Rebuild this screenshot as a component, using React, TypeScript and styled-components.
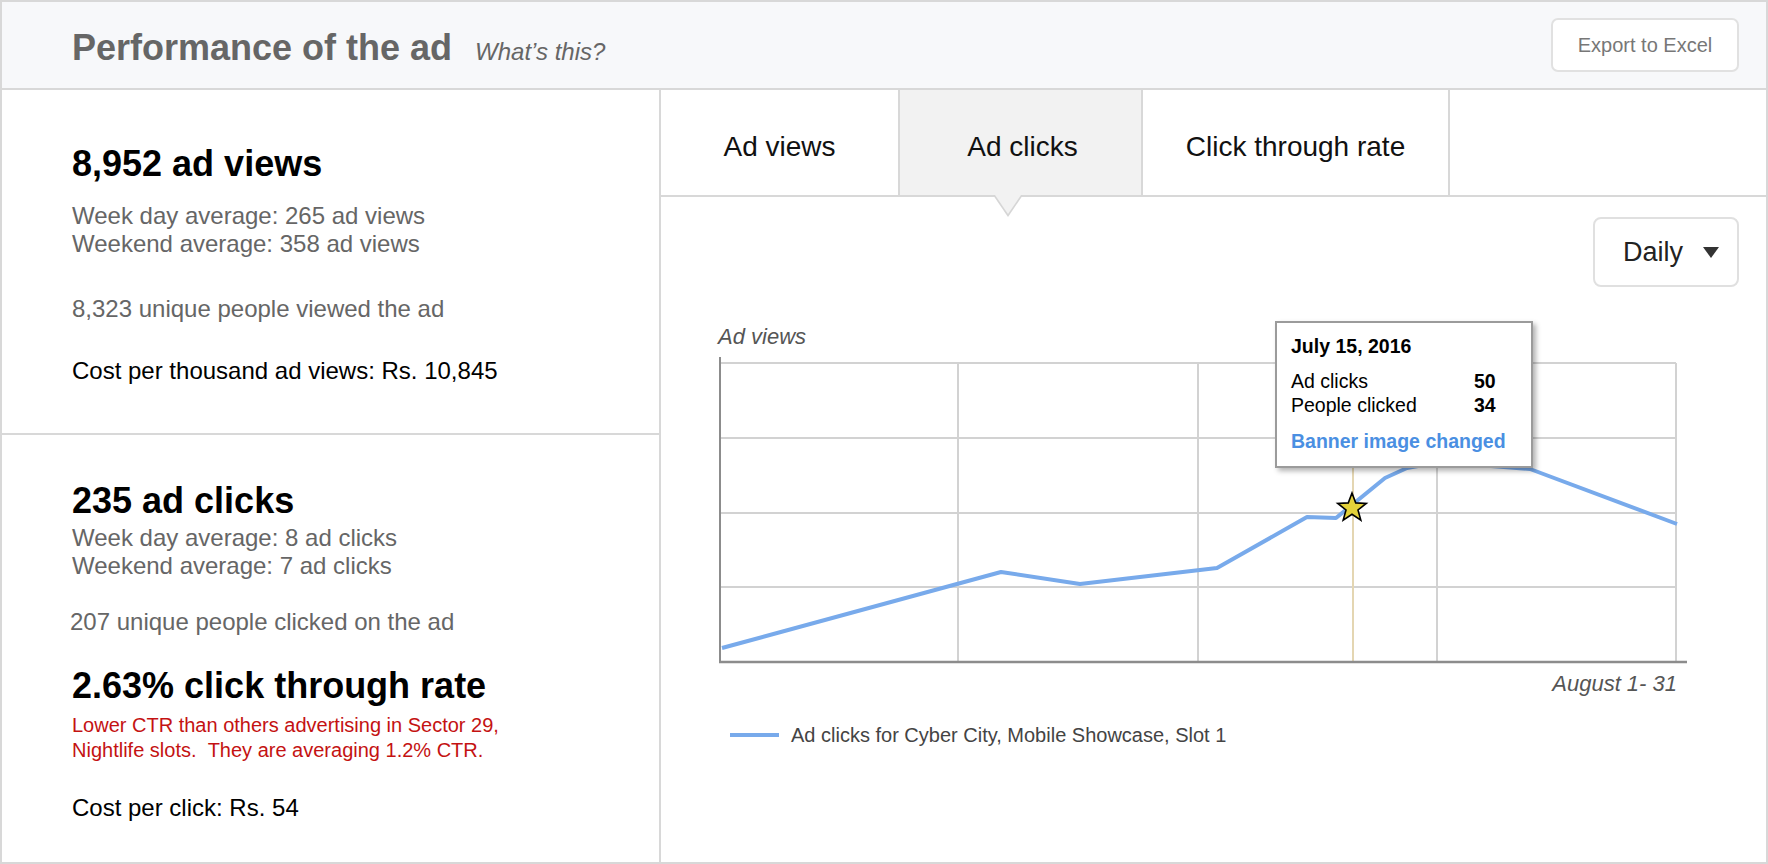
import React from "react";
import styled, { createGlobalStyle } from "styled-components";

const GlobalStyle = createGlobalStyle`
  html, body { margin: 0; padding: 0; background: #fff; }
  body { font-family: "Liberation Sans", Arial, Helvetica, sans-serif; color: #000; }
  * { box-sizing: border-box; }
`;

const Frame = styled.div`
  width: 1768px;
  height: 864px;
  border: 2px solid #d8d8d8;
  display: flex;
  flex-direction: column;
  overflow: hidden;
  background: #fff;
`;

const Header = styled.header`
  flex: none;
  height: 88px;
  background: #f7f8fa;
  border-bottom: 2px solid #d8d8d8;
  display: flex;
  align-items: center;
  justify-content: space-between;
  padding: 0 27px 0 70px;
`;

const TitleGroup = styled.div`
  display: flex;
  align-items: baseline;
  gap: 23px;
  padding-top: 5px;
`;

const Title = styled.h1`
  margin: 0;
  font-size: 36px;
  line-height: 40px;
  font-weight: 700;
  color: #666;
`;

const HelpLink = styled.span`
  font-size: 24px;
  font-style: italic;
  color: #666;
`;

const ExportButton = styled.button`
  width: 188px;
  height: 54px;
  background: #fff;
  border: 2px solid #e1e1e1;
  border-radius: 7px;
  font-family: inherit;
  font-size: 20px;
  color: #777;
  cursor: pointer;
`;

const Body = styled.div`
  flex: 1;
  display: flex;
  min-height: 0;
`;

const LeftPanel = styled.aside`
  flex: none;
  width: 659px;
  border-right: 2px solid #d8d8d8;
  display: flex;
  flex-direction: column;
`;

const Section = styled.section<{ $top: number; $height?: number }>`
  padding: ${(p) => p.$top}px 0 0 70px;
  ${(p) => (p.$height ? `height: ${p.$height}px; flex: none; border-bottom: 2px solid #d8d8d8;` : "flex: 1;")}
`;

const StatHeading = styled.h2<{ $gap?: number }>`
  margin: ${(p) => p.$gap ?? 0}px 0 0 0;
  font-size: 36px;
  line-height: 40px;
  font-weight: 700;
  color: #000;
`;

const StatLine = styled.p<{ $gap?: number; $tone?: "muted" | "strong"; $shift?: number }>`
  margin: ${(p) => p.$gap ?? 0}px 0 0 ${(p) => p.$shift ?? 0}px;
  font-size: 24px;
  line-height: 28px;
  color: ${(p) => (p.$tone === "strong" ? "#000" : "#666")};
`;

const Warning = styled.p<{ $gap?: number }>`
  margin: ${(p) => p.$gap ?? 0}px 0 0 0;
  font-size: 20px;
  line-height: 25px;
  color: #c41212;
`;

const RightPanel = styled.main`
  flex: 1;
  position: relative;
  display: flex;
  flex-direction: column;
`;

const Tabs = styled.nav`
  flex: none;
  height: 107px;
  border-bottom: 2px solid #d8d8d8;
  display: flex;
`;

const Tab = styled.div<{ $width: number; $active?: boolean }>`
  position: relative;
  width: ${(p) => p.$width}px;
  height: 100%;
  border-right: 2px solid #d8d8d8;
  display: flex;
  align-items: center;
  justify-content: center;
  padding-top: 8px;
  font-size: 28px;
  color: #111;
  background: ${(p) => (p.$active ? "#f2f2f2" : "#fff")};
  ${(p) =>
    p.$active
      ? `
    padding-left: 4px;
    &::before {
      content: "";
      position: absolute;
      top: 100%;
      left: 93px;
      border-left: 15px solid transparent;
      border-right: 15px solid transparent;
      border-top: 22px solid #d6d6d6;
      z-index: 2;
    }
    &::after {
      content: "";
      position: absolute;
      top: 100%;
      left: 95px;
      border-left: 13px solid transparent;
      border-right: 13px solid transparent;
      border-top: 19px solid #f2f2f2;
      z-index: 3;
    }
  `
      : ""}
`;

const Toolbar = styled.div`
  display: flex;
  justify-content: flex-end;
  padding: 20px 27px 0 0;
`;

const Select = styled.button`
  width: 146px;
  height: 70px;
  background: #fff;
  border: 2px solid #e0e0e0;
  border-radius: 8px;
  display: flex;
  align-items: center;
  gap: 20px;
  padding: 0 0 0 28px;
  font-family: inherit;
  font-size: 27px;
  color: #222;
  cursor: pointer;
`;

const ChartBlock = styled.div`
  margin-top: 37px;
  padding-left: 55px;
`;

const AxisTitle = styled.div`
  margin-left: 2px;
  font-size: 22px;
  line-height: 26px;
  font-style: italic;
  color: #555;
`;

const Plot = styled.svg`
  display: block;
  margin-top: 2px;
`;

const RangeLabel = styled.div`
  width: 976px;
  margin-top: 5px;
  padding-right: 15px;
  text-align: right;
  font-size: 22px;
  line-height: 26px;
  font-style: italic;
  color: #555;
`;

const Legend = styled.div`
  display: flex;
  align-items: center;
  gap: 12px;
  margin-top: 26px;
  padding-left: 69px;
`;

const LegendSwatch = styled.span`
  width: 49px;
  height: 4px;
  background: #78aaeb;
`;

const LegendText = styled.span`
  font-size: 20px;
  line-height: 24px;
  color: #444;
`;

const Tooltip = styled.div`
  position: absolute;
  left: 614px;
  top: 231px;
  width: 258px;
  height: 147px;
  background: #fff;
  border: 2px solid #9b9b9b;
  box-shadow: 3px 3px 5px rgba(0, 0, 0, 0.3);
  padding: 12px 14px 0 14px;
  z-index: 5;
`;

const TooltipDate = styled.div`
  font-size: 19.5px;
  line-height: 22px;
  font-weight: 700;
  color: #000;
`;

const TooltipGrid = styled.div`
  display: grid;
  grid-template-columns: 183px auto;
  margin-top: 12px;
  font-size: 19.5px;
  line-height: 24px;
  color: #000;
`;

const TooltipValue = styled.span`
  font-weight: 700;
`;

const TooltipLink = styled.div`
  margin-top: 12px;
  font-size: 19.5px;
  line-height: 24px;
  font-weight: 700;
  color: #4a8fe2;
`;

const hLines = [11, 86, 161, 235];
const vLines = [242, 482, 721, 960];
const series: [number, number][] = [
  [6, 296],
  [285, 220],
  [364, 232],
  [501, 216],
  [591, 165],
  [620, 166],
  [669, 126],
  [691, 116],
  [724, 110],
  [814, 117],
  [961, 172],
];

const starPoints = (cx: number, cy: number, R: number, r: number) =>
  Array.from({ length: 10 }, (_, i) => {
    const a = -Math.PI / 2 + (i * Math.PI) / 5;
    const rad = i % 2 === 0 ? R : r;
    return `${(cx + rad * Math.cos(a)).toFixed(2)},${(cy + rad * Math.sin(a)).toFixed(2)}`;
  }).join(" ");

const Chart: React.FC = () => (
  <Plot width={976} height={314} viewBox="0 0 976 314">
    {hLines.map((y) => (
      <line key={`h${y}`} x1={4} x2={960} y1={y} y2={y} stroke="#d2d2d2" strokeWidth={2} />
    ))}
    {vLines.map((x) => (
      <line key={`v${x}`} x1={x} x2={x} y1={11} y2={310} stroke="#d2d2d2" strokeWidth={2} />
    ))}
    <line x1={637} x2={637} y1={116} y2={310} stroke="#e4d6b2" strokeWidth={2} />
    <line x1={4} x2={4} y1={5} y2={311} stroke="#8c8c8c" strokeWidth={2} />
    <line x1={3} x2={971} y1={310} y2={310} stroke="#8c8c8c" strokeWidth={2.5} />
    <polyline
      points={series.map(([x, y]) => `${x},${y}`).join(" ")}
      fill="none"
      stroke="#78aaeb"
      strokeWidth={4}
      strokeLinejoin="round"
    />
    <polygon points={starPoints(636, 156, 15, 6.3)} fill="#e4d23a" stroke="#000" strokeWidth={1.6} strokeLinejoin="miter" />
  </Plot>
);

export default function App() {
  return (
    <>
      <GlobalStyle />
      <Frame>
        <Header>
          <TitleGroup>
            <Title>Performance of the ad</Title>
            <HelpLink>What’s this?</HelpLink>
          </TitleGroup>
          <ExportButton>Export to Excel</ExportButton>
        </Header>
        <Body>
          <LeftPanel>
            <Section $top={54} $height={345}>
              <StatHeading>8,952 ad views</StatHeading>
              <StatLine $gap={18}>Week day average: 265 ad views</StatLine>
              <StatLine>Weekend average: 358 ad views</StatLine>
              <StatLine $gap={37}>8,323 unique people viewed the ad</StatLine>
              <StatLine $gap={34} $tone="strong">
                Cost per thousand ad views: Rs. 10,845
              </StatLine>
            </Section>
            <Section $top={46}>
              <StatHeading>235 ad clicks</StatHeading>
              <StatLine $gap={3}>Week day average: 8 ad clicks</StatLine>
              <StatLine>Weekend average: 7 ad clicks</StatLine>
              <StatLine $gap={28} $shift={-2}>
                207 unique people clicked on the ad
              </StatLine>
              <StatHeading $gap={30}>2.63% click through rate</StatHeading>
              <Warning $gap={7}>
                Lower CTR than others advertising in Sector 29,
                <br />
                Nightlife slots.{"\u00a0\u00a0"}They are averaging 1.2% CTR.
              </Warning>
              <StatLine $gap={31} $tone="strong">
                Cost per click: Rs. 54
              </StatLine>
            </Section>
          </LeftPanel>
          <RightPanel>
            <Tabs>
              <Tab $width={239}>Ad views</Tab>
              <Tab $width={243} $active>
                Ad clicks
              </Tab>
              <Tab $width={307}>Click through rate</Tab>
            </Tabs>
            <Toolbar>
              <Select>
                <span>Daily</span>
                <svg width="16" height="11" viewBox="0 0 16 11">
                  <polygon points="0,0 16,0 8,11" fill="#333" />
                </svg>
              </Select>
            </Toolbar>
            <ChartBlock>
              <AxisTitle>Ad views</AxisTitle>
              <Chart />
              <RangeLabel>August 1- 31</RangeLabel>
            </ChartBlock>
            <Legend>
              <LegendSwatch />
              <LegendText>Ad clicks for Cyber City, Mobile Showcase, Slot 1</LegendText>
            </Legend>
            <Tooltip>
              <TooltipDate>July 15, 2016</TooltipDate>
              <TooltipGrid>
                <span>Ad clicks</span>
                <TooltipValue>50</TooltipValue>
                <span>People clicked</span>
                <TooltipValue>34</TooltipValue>
              </TooltipGrid>
              <TooltipLink>Banner image changed</TooltipLink>
            </Tooltip>
          </RightPanel>
        </Body>
      </Frame>
    </>
  );
}
